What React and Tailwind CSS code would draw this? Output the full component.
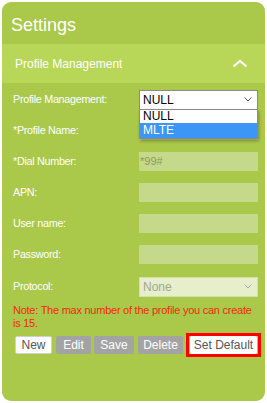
export default function App() {
  const font = { fontFamily: '"Liberation Sans", Arial, sans-serif' };
  const Row = ({ label, children }) => (
    <div className="flex items-center h-[31px]">
      <div className="w-[126px] text-[10.8px] text-white tracking-[-0.3px]">{label}</div>
      <div className="w-[119px]">{children}</div>
    </div>
  );
  const Input = ({ value }) => (
    <div className="h-[19px] bg-[#c5d98b] text-[11px] text-[#8a9a5a] pl-[1px] leading-[19px]">{value}</div>
  );
  return (
    <div className="w-[267px] h-[403px] bg-white p-[2px]" style={font}>
      <div className="h-[399px] w-[263px] rounded-[9px] bg-[#aac84a] flex flex-col overflow-hidden">
        <div className="h-[42px] flex items-center pl-[9px] pt-[5px] text-[18px] text-white">Settings</div>
        <div className="h-[39px] bg-[#b8d657] flex items-center justify-between pl-[13px] pr-[17px] text-[12px] text-white">
          <span>Profile Management</span>
          <svg width="16" height="9" viewBox="0 0 16 9" fill="none">
            <path d="M1.5 7.5 L8 2 L14.5 7.5" stroke="white" strokeWidth="2.2" />
          </svg>
        </div>
        <div className="pl-[11px] pt-[1px] flex flex-col">
          <div className="relative">
            <Row label="Profile Management:">
              <div className="h-[20px] bg-white border border-[#8a8a8a] flex items-center justify-between pl-[3px] pr-[5px] text-[12px] text-black">
                <span>NULL</span>
                <svg width="8" height="5" viewBox="0 0 8 5"><path d="M0.5 0.5 L4 4 L7.5 0.5" stroke="#555" strokeWidth="1" fill="none" /></svg>
              </div>
            </Row>
            <div className="absolute left-[126px] top-[25px] w-[119px] bg-white border border-[#8a8a8a] shadow-[1px_2px_3px_rgba(0,0,0,0.3)] text-[12px] z-10">
              <div className="h-[13px] leading-[13px] pl-[3px] text-black">NULL</div>
              <div className="h-[15px] leading-[15px] pl-[3px] bg-[#3b96f5] text-white">MLTE</div>
            </div>
          </div>
          <Row label="*Profile Name:"><Input value="" /></Row>
          <Row label="*Dial Number:"><Input value="*99#" /></Row>
          <Row label="APN:"><Input value="" /></Row>
          <Row label="User name:"><Input value="" /></Row>
          <Row label="Password:"><Input value="" /></Row>
          <div className="flex items-center h-[33px]">
            <div className="w-[126px] text-[10.8px] text-white tracking-[-0.3px]">Protocol:</div>
            <div className="w-[119px] h-[20px] bg-[#e6eecc] border border-[#d4e0a8] flex items-center justify-between pl-[3px] pr-[5px] text-[12px] text-[#a0a890]">
              <span>None</span>
              <svg width="8" height="5" viewBox="0 0 8 5"><path d="M0.5 0.5 L4 4 L7.5 0.5" stroke="#aaa" strokeWidth="1" fill="none" /></svg>
            </div>
          </div>
          <div className="mt-[1px] text-[11px] leading-[13px] text-[#f02a10] tracking-[-0.25px]">
            <span className="whitespace-nowrap">Note: The max number of the profile you can create</span>
            <br />
            is 15.
          </div>
          <div className="mt-[3px] flex items-center text-[12px]">
            <div className="ml-[2px] h-[18px] w-[37px] bg-white rounded-[2px] border border-[#d0d0d0] text-[#555] flex items-center justify-center">New</div>
            <div className="ml-[4px] h-[18px] w-[35px] bg-[#a3a3a3] rounded-[2px] text-white flex items-center justify-center">Edit</div>
            <div className="ml-[3px] h-[18px] w-[40px] bg-[#a3a3a3] rounded-[2px] text-white flex items-center justify-center">Save</div>
            <div className="ml-[4px] h-[18px] w-[45px] bg-[#a3a3a3] rounded-[2px] text-white flex items-center justify-center">Delete</div>
            <div className="ml-[3px] h-[24px] w-[75px] border-[3px] border-[#ff0000] flex items-center justify-center">
              <div className="h-[18px] w-[67px] bg-white rounded-[2px] text-[#555] flex items-center justify-center">Set Default</div>
            </div>
          </div>
        </div>
      </div>
    </div>
  );
}
